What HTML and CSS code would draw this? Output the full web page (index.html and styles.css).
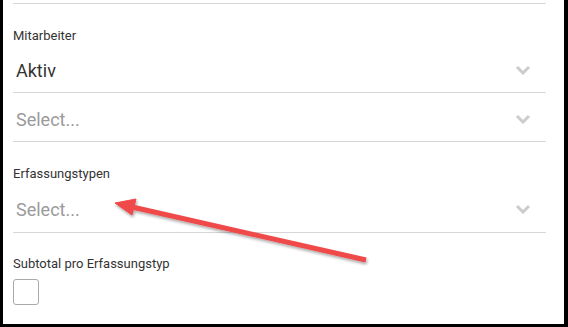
FILE: index.html
```html
<!DOCTYPE html>
<html lang="en">
<head>
    <meta charset="UTF-8">
    <meta name="viewport" content="width=device-width, initial-scale=1.0">
    <title>Filter</title>
    <link rel="stylesheet" href="styles.css">
</head>
<body>
    <div class="frame">
        <div class="form">
            <div class="top-rule"></div>
            <div class="group">
                <label class="label">Mitarbeiter</label>
                <div class="select">
                    <span class="value">Aktiv</span>
                    <svg class="chevron" width="16" height="10" viewBox="0 0 16 10"><path d="M2 2 L8 8 L14 2" /></svg>
                </div>
                <div class="select">
                    <span class="placeholder">Select...</span>
                    <svg class="chevron" width="16" height="10" viewBox="0 0 16 10"><path d="M2 2 L8 8 L14 2" /></svg>
                </div>
            </div>
            <div class="group group-types">
                <label class="label">Erfassungstypen</label>
                <div class="select">
                    <span class="placeholder">Select...</span>
                    <svg class="chevron" width="16" height="10" viewBox="0 0 16 10"><path d="M2 2 L8 8 L14 2" /></svg>
                </div>
            </div>
            <div class="group group-check">
                <label class="label">Subtotal pro Erfassungstyp</label>
                <div class="checkbox"></div>
            </div>
        </div>
        <!-- callout arrow drawn over the form -->
        <svg class="callout" width="568" height="327" viewBox="0 0 568 327">
            <defs>
                <filter id="shadow" x="-10%" y="-50%" width="120%" height="200%">
                    <feDropShadow dx="1" dy="2" stdDeviation="1.5" flood-color="#000" flood-opacity="0.35" />
                </filter>
            </defs>
            <g filter="url(#shadow)" fill="#f04848" stroke="#f04848">
                <line x1="366" y1="260" x2="130" y2="206.5" stroke-width="5" stroke-linecap="butt" />
                <polygon points="115,203 136,199 132,215" stroke-width="1" stroke-linejoin="round" />
            </g>
        </svg>
    </div>
</body>
</html>
```

FILE: styles.css
```css
* { box-sizing: border-box; }
body { margin: 0; font-family: Roboto, "Liberation Sans", sans-serif; background: #fff; }
.frame { position: relative; width: 568px; height: 327px; border-left: 3px solid #000; border-right: 4px solid #000; border-bottom: 3px solid #000; background: #fff; overflow: hidden; }
.form { padding: 0 18px 0 10px; }
.top-rule { height: 4px; border-bottom: 1px solid #d6d6d6; }
.group { padding-top: 24px; }
.label { display: block; font-size: 13px; line-height: 16px; color: #333; }
.select { display: flex; align-items: center; justify-content: space-between; height: 49px; padding: 4px 15px 0 3px; border-bottom: 1px solid #d6d6d6; font-size: 18px; }
.value { color: #333; }
.placeholder { color: #9a9a9a; }
.chevron path { fill: none; stroke: #cccccc; stroke-width: 3; }
.group-types .select { height: 51px; }
.group-check { padding-top: 23px; }
.checkbox { width: 26px; height: 26px; margin-top: 7px; border: 1px solid #aaa; border-radius: 3px; }
.callout { position: absolute; left: -3px; top: 0; }
```
